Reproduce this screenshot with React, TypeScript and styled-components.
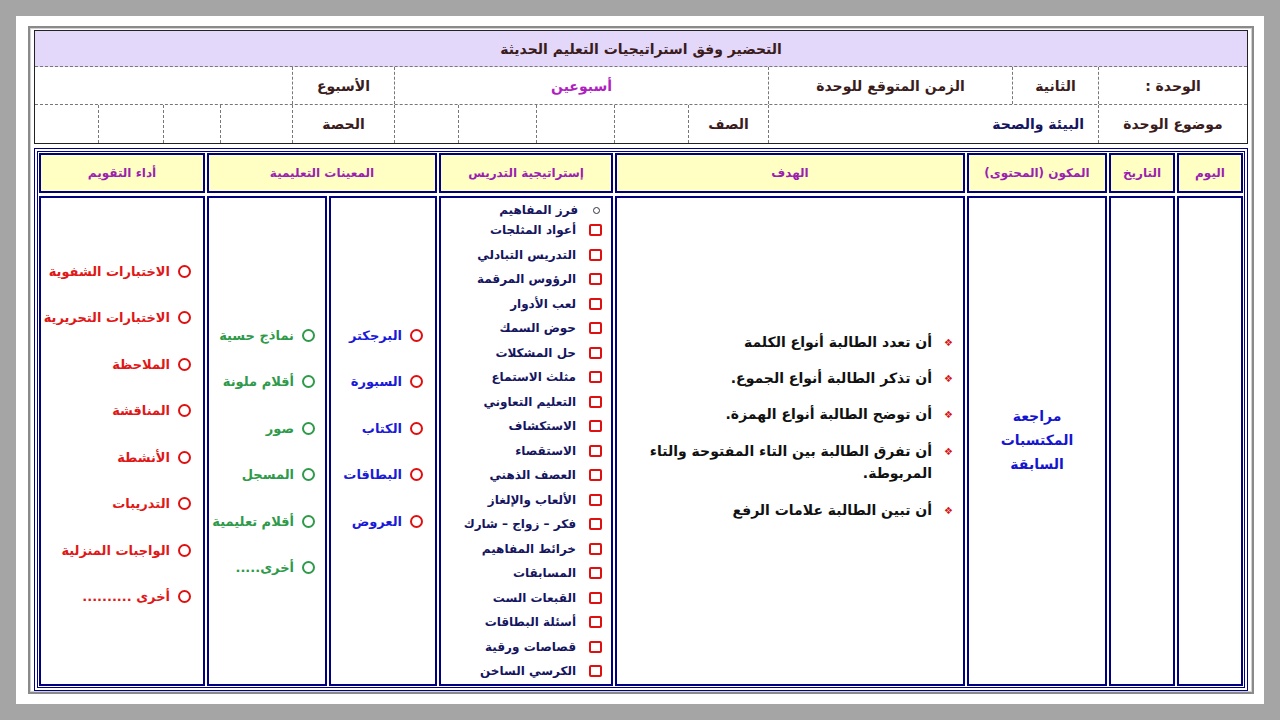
import styled, { createGlobalStyle } from 'styled-components'

const Global = createGlobalStyle`
  html, body { margin: 0; padding: 0; }
  body { background: #a5a5a5; font-family: "DejaVu Sans", "Liberation Sans", sans-serif; }
`

const Page = styled.div`
  width: 1280px;
  height: 720px;
  box-sizing: border-box;
  padding: 16px;
`

const Sheet = styled.div`
  height: 100%;
  box-sizing: border-box;
  background: #fff;
  padding: 10px 10px 10px 12px;
`

const Panel = styled.div`
  height: 100%;
  box-sizing: border-box;
  border: 2px solid #8a8a8a;
  box-shadow: inset 0 0 0 1px #d0d0d0;
  padding: 2px 4px 4px 4px;
  display: flex;
  flex-direction: column;
  gap: 4px;
  direction: rtl;
`

const Head = styled.div`
  border: 1.5px solid #222;
  display: grid;
  grid-template-rows: 36px 38px 38px;
`

const Title = styled.div`
  background: #e3d7fa;
  border-bottom: 1px dashed #777;
  display: flex;
  align-items: center;
  justify-content: center;
  font-weight: bold;
  font-size: 14px;
  color: #3a1c1c;
`

const HeadRow = styled.div<{ cols: string }>`
  display: grid;
  grid-template-columns: ${({ cols }) => cols};
  border-bottom: 1px dashed #777;
  &:last-child { border-bottom: none; }
`

const HCell = styled.div<{ color?: string; align?: string }>`
  border-left: 1px dashed #777;
  &:last-child { border-left: none; }
  display: flex;
  align-items: center;
  justify-content: ${({ align }) => align || 'center'};
  padding: 0 14px;
  font-weight: bold;
  font-size: 14px;
  color: ${({ color }) => color || '#3a1c1c'};
`

const Main = styled.div`
  flex: 1;
  border: 4px double #000080;
  padding: 1px;
  display: grid;
  grid-template-columns: 66px 66px 140px 350px 174px 108px 120px 1fr;
  grid-template-rows: 40px 1fr;
  gap: 3px 2px;
`

const Cell = styled.div<{ span?: number }>`
  border: 2px solid #000080;
  grid-column: span ${({ span }) => span || 1};
  min-width: 0;
`

const HeadCell = styled(Cell)`
  background: #ffffc4;
  display: flex;
  align-items: center;
  justify-content: center;
  font-weight: bold;
  font-size: 12px;
  color: #9b1fb0;
`

const Centered = styled(Cell)`
  display: flex;
  flex-direction: column;
  justify-content: center;
  align-items: center;
  text-align: center;
  font-weight: bold;
  font-size: 14px;
  color: #1515d0;
  line-height: 1.7;
`

const Goals = styled(Cell)`
  display: flex;
  flex-direction: column;
  justify-content: center;
  gap: 14px;
  padding: 0 10px 30px 10px;
`

const Goal = styled.div`
  display: flex;
  gap: 12px;
  font-weight: bold;
  font-size: 14px;
  line-height: 1.6;
  color: #111;
  &::before {
    content: '❖';
    color: #d81010;
    font-size: 10px;
    padding-top: 4px;
  }
`

const List = styled(Cell)`
  display: flex;
  flex-direction: column;
  padding: 4px 8px 0 0;
`

const Strat = styled.div<{ circle?: boolean }>`
  height: 24.5px;
  display: flex;
  align-items: center;
  gap: 12px;
  font-weight: bold;
  font-size: 12px;
  color: #151560;
  &::before {
    content: '';
    width: ${({ circle }) => (circle ? '5px' : '9px')};
    height: ${({ circle }) => (circle ? '5px' : '8px')};
    margin: 0 ${({ circle }) => (circle ? '3px' : '1px')};
    border: ${({ circle }) => (circle ? '1px solid #334' : '2px solid #e01010')};
    border-radius: ${({ circle }) => (circle ? '50%' : '2px')};
  }
`

const Marks = styled(Cell)<{ pad: number }>`
  display: flex;
  flex-direction: column;
  justify-content: flex-start;
  padding: ${({ pad }) => pad}px 12px 0 0;
`

const Mark = styled.div<{ color: string; ring: string }>`
  height: 46.5px;
  display: flex;
  align-items: center;
  gap: 8px;
  font-weight: bold;
  font-size: 13px;
  color: ${({ color }) => color};
  &::before {
    content: '';
    width: 9px;
    height: 9px;
    border: 2px solid ${({ ring }) => ring};
    border-radius: 50%;
  }
`

const goals = [
  'أن تعدد الطالبة أنواع الكلمة',
  'أن تذكر الطالبة أنواع الجموع.',
  'أن توضح الطالبة أنواع الهمزة.',
  'أن تفرق الطالبة بين التاء المفتوحة والتاء المربوطة.',
  'أن تبين الطالبة علامات الرفع',
]

const strategies = [
  'أعواد المثلجات', 'التدريس التبادلي', 'الرؤوس المرقمة', 'لعب الأدوار', 'حوض السمك',
  'حل المشكلات', 'مثلث الاستماع', 'التعليم التعاوني', 'الاستكشاف', 'الاستقصاء',
  'العصف الذهني', 'الألعاب والإلغاز', 'فكر – زواج – شارك', 'خرائط المفاهيم', 'المسابقات',
  'القبعات الست', 'أسئلة البطاقات', 'قصاصات ورقية', 'الكرسي الساخن',
]

const aidsBlue = ['البرجكتر', 'السبورة', 'الكتاب', 'البطاقات', 'العروض']
const aidsGreen = ['نماذج حسية', 'أقلام ملونة', 'صور', 'المسجل', 'أقلام تعليمية', 'أخرى.....']
const evals = [
  'الاختبارات الشفوية', 'الاختبارات التحريرية', 'الملاحظة', 'المناقشة', 'الأنشطة',
  'التدريبات', 'الواجبات المنزلية', 'أخرى ..........',
]

export default function App() {
  return (
    <Page>
      <Global />
      <Sheet>
        <Panel>
          <Head>
            <Title>التحضير وفق استراتيجيات التعليم الحديثة</Title>
            <HeadRow cols="149px 86px 244px 374px 102px 1fr">
              <HCell>الوحدة :</HCell>
              <HCell>الثانية</HCell>
              <HCell>الزمن المتوقع للوحدة</HCell>
              <HCell color="#b01fc0">أسبوعين</HCell>
              <HCell>الأسبوع</HCell>
              <HCell />
            </HeadRow>
            <HeadRow cols="149px 330px 80px 74px 78px 78px 64px 102px 72px 57px 65px 1fr">
              <HCell>موضوع الوحدة</HCell>
              <HCell color="#151560" align="flex-start">البيئة والصحة</HCell>
              <HCell>الصف</HCell>
              <HCell /><HCell /><HCell /><HCell />
              <HCell>الحصة</HCell>
              <HCell /><HCell /><HCell /><HCell />
            </HeadRow>
          </Head>
          <Main>
            <HeadCell>اليوم</HeadCell>
            <HeadCell>التاريخ</HeadCell>
            <HeadCell>المكون (المحتوى)</HeadCell>
            <HeadCell>الهدف</HeadCell>
            <HeadCell>إستراتيجية  التدريس</HeadCell>
            <HeadCell span={2}>المعينات التعليمية</HeadCell>
            <HeadCell>أداء التقويم</HeadCell>

            <Cell />
            <Cell />
            <Centered>
              <div>مراجعة</div>
              <div>المكتسبات</div>
              <div>السابقة</div>
            </Centered>
            <Goals>
              {goals.map((g) => <Goal key={g}>{g}</Goal>)}
            </Goals>
            <List>
              <Strat circle style={{ height: 16 }}>فرز المفاهيم</Strat>
              {strategies.map((s) => <Strat key={s}>{s}</Strat>)}
            </List>
            <Marks pad={114}>
              {aidsBlue.map((s) => <Mark key={s} color="#1a1ad8" ring="#e01010">{s}</Mark>)}
            </Marks>
            <Marks pad={114} style={{ paddingRight: 10 }}>
              {aidsGreen.map((s) => <Mark key={s} color="#2e9a4a" ring="#2e9a4a">{s}</Mark>)}
            </Marks>
            <Marks pad={50}>
              {evals.map((s) => <Mark key={s} color="#e01818" ring="#e01010">{s}</Mark>)}
            </Marks>
          </Main>
        </Panel>
      </Sheet>
    </Page>
  )
}
